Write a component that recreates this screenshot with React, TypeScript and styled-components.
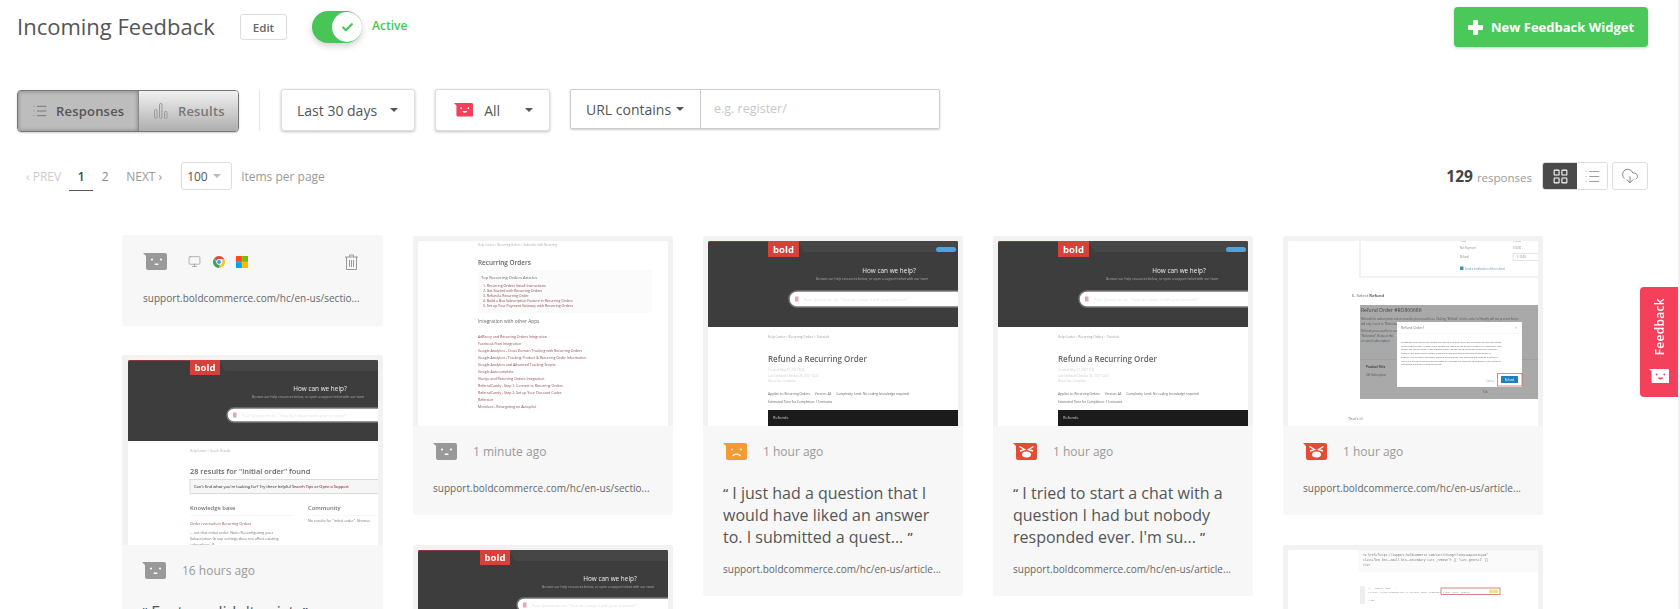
import React from "react";
import styled, { createGlobalStyle } from "styled-components";
import { Check, CloudDownload, LayoutGrid, List, Monitor } from "lucide-react";

const GlobalStyle = createGlobalStyle`
  html, body {
    margin: 0;
    padding: 0;
    height: 609px;
    overflow: hidden;
    background: #fff;
  }
  * {
    box-sizing: border-box;
  }
`;

const Page = styled.div`
  position: relative;
  width: 1680px;
  height: 609px;
  overflow: hidden;
  font-family: "Open Sans", "Liberation Sans", sans-serif;
  color: #555;
  background: #fff;
  border-right: 2px solid #f1f1f1;
`;

const TopBar = styled.div`
  display: flex;
  align-items: flex-start;
  height: 90px;
  padding: 7px 30px 0 17px;
`;

const Title = styled.h1`
  width: 198px;
  margin: 0 25px 0 0;
  font-size: 22px;
  line-height: 38px;
  font-weight: 400;
  color: #555;
  white-space: nowrap;
`;

const EditButton = styled.button`
  width: 47px;
  height: 26px;
  margin: 7px 25px 0 0;
  padding: 0;
  font: 600 11.5px "Open Sans", sans-serif;
  color: #666;
  background: #fff;
  border: 1px solid #ddd;
  border-radius: 3px;
`;

const Toggle = styled.div`
  position: relative;
  width: 50px;
  height: 32px;
  margin: 4px 10px 0 0;
  border-radius: 16px;
  background: #47c556;
  box-shadow: 0 3px 6px rgba(0, 0, 0, 0.18);
`;

const Knob = styled.span`
  position: absolute;
  top: 1px;
  right: 0;
  width: 30px;
  height: 30px;
  display: flex;
  align-items: center;
  justify-content: center;
  border-radius: 50%;
  background: #fff;
  color: #47c556;
`;

const ActiveLabel = styled.span`
  font-size: 12px;
  font-weight: 600;
  line-height: 38px;
  color: #47c556;
`;

const NewButton = styled.button`
  display: flex;
  align-items: center;
  gap: 8px;
  width: 194px;
  height: 40px;
  margin-left: auto;
  padding: 0 0 0 14px;
  font: 700 13px "Open Sans", sans-serif;
  color: #fff;
  background: #4bc85a;
  border: 0;
  border-radius: 4px;
  box-shadow: 0 1px 3px rgba(0, 0, 0, 0.2);
`;

const FilterRow = styled.div`
  display: flex;
  align-items: flex-start;
  height: 73px;
  margin-top: -1px;
  padding-left: 17px;
`;

const Segment = styled.div`
  display: flex;
  width: 222px;
  height: 42px;
  margin-top: 1px;
  border: 1px solid #777;
  border-radius: 4px;
  overflow: hidden;
  box-shadow: 0 1px 2px rgba(0, 0, 0, 0.2);
`;

const SegmentItem = styled.div<{ $active?: boolean }>`
  display: flex;
  align-items: center;
  gap: ${(p) => (p.$active ? "8px" : "10px")};
  width: ${(p) => (p.$active ? "122px" : "100px")};
  padding-left: ${(p) => (p.$active ? "14px" : "15px")};
  font-size: 13px;
  font-weight: 600;
  letter-spacing: 0.2px;
  color: ${(p) => (p.$active ? "#555" : "#777")};
  background: ${(p) => (p.$active ? "#bdbdbd" : "linear-gradient(#f1f1f1, #aeaeae)")};
  box-shadow: ${(p) => (p.$active ? "inset 0 0 4px rgba(0, 0, 0, 0.35)" : "none")};
  border-right: ${(p) => (p.$active ? "1px solid #888" : "0")};
`;

const VerticalRule = styled.div`
  width: 1px;
  height: 40px;
  margin: 1px 21px 0 20px;
  background: #e4e4e4;
`;

const Dropdown = styled.div<{ $width: number; $inset: number }>`
  display: flex;
  align-items: center;
  justify-content: space-between;
  width: ${(p) => p.$width}px;
  height: 42px;
  margin-right: 20px;
  padding: 0 16px 0 ${(p) => p.$inset}px;
  font-size: 14px;
  color: #555;
  background: #fff;
  border: 1px solid #ddd;
  border-radius: 3px;
  box-shadow: 0 1px 3px rgba(0, 0, 0, 0.25);
`;

const DropdownLabel = styled.span`
  display: flex;
  align-items: center;
  gap: 11px;
`;

const Caret = styled.span<{ $light?: boolean }>`
  display: inline-block;
  width: 0;
  height: 0;
  border-left: 4px solid transparent;
  border-right: 4px solid transparent;
  border-top: 4px solid ${(p) => (p.$light ? "#bbb" : "#555")};
`;

const UrlFilter = styled.div`
  display: flex;
  width: 370px;
  height: 40px;
  border: 1px solid #ccc;
  border-radius: 2px;
  font-size: 14px;
  box-shadow: 0 1px 2px rgba(0, 0, 0, 0.2);
`;

const UrlMode = styled.div`
  display: flex;
  align-items: center;
  gap: 5px;
  width: 130px;
  padding-left: 15px;
  border-right: 1px solid #ccc;
`;

const UrlInput = styled.div`
  flex: 1;
  padding-left: 13px;
  font-size: 12.5px;
  line-height: 38px;
  color: #c8c8c8;
`;

const PagerRow = styled.div`
  display: flex;
  align-items: center;
  height: 28px;
  padding: 0 30px 0 26px;
  font-size: 12px;
`;

const PagerLink = styled.span<{ $muted?: boolean }>`
  color: ${(p) => (p.$muted ? "#ccc" : "#999")};
  font-size: 12px;
`;

const PageNumber = styled.span<{ $current?: boolean }>`
  width: 24px;
  height: 28px;
  margin-top: 2px;
  font-size: 12px;
  font-weight: ${(p) => (p.$current ? 600 : 400)};
  line-height: 28px;
  text-align: center;
  color: ${(p) => (p.$current ? "#444" : "#888")};
  border-bottom: ${(p) => (p.$current ? "1px solid #555" : "0")};
`;

const PageNumbers = styled.div`
  display: flex;
  margin: 0 9px 0 8px;
`;

const PerPage = styled.div`
  display: flex;
  align-items: center;
  justify-content: space-between;
  width: 51px;
  height: 28px;
  margin: 0 9px 0 19px;
  padding: 0 10px 0 5px;
  font-size: 12px;
  border: 1px solid #ddd;
  border-radius: 3px;
`;

const PerPageLabel = styled.span`
  color: #999;
  font-size: 12px;
`;

const Count = styled.div`
  display: flex;
  align-items: baseline;
  gap: 4px;
  margin-left: auto;
  margin-right: 10px;
  font-size: 11.5px;
  color: #999;
`;

const CountNumber = styled.b`
  font-size: 15.5px;
  font-weight: 700;
  color: #444;
`;

const ViewSwitch = styled.div`
  display: flex;
  width: 66px;
  height: 28px;
  border: 1px solid #ddd;
  border-radius: 3px;
  overflow: hidden;
`;

const ViewButton = styled.div<{ $active?: boolean }>`
  display: flex;
  align-items: center;
  justify-content: center;
  flex: ${(p) => (p.$active ? "0 0 34px" : "1")};
  color: ${(p) => (p.$active ? "#fff" : "#777")};
  background: ${(p) => (p.$active ? "#4a4a4a" : "#fff")};
`;

const DownloadButton = styled.div`
  display: flex;
  align-items: center;
  justify-content: center;
  width: 36px;
  height: 28px;
  margin-left: 4px;
  color: #666;
  border: 1px solid #ddd;
  border-radius: 3px;
`;

const Board = styled.div`
  display: grid;
  grid-template-columns: 261px repeat(4, 260px);
  column-gap: 30px;
  margin-top: 45px;
  padding-left: 122px;
`;

const Column = styled.div<{ $first?: boolean }>`
  display: flex;
  flex-direction: column;
  gap: ${(p) => (p.$first ? "29px" : "30px")};
  margin-top: ${(p) => (p.$first ? "0" : "1px")};
`;

const Card = styled.article`
  background: #f7f7f8;
  border-radius: 3px;
  overflow: hidden;
`;

const ShotFrame = styled.div`
  height: 190px;
  padding-top: 5px;
  background: #f2f2f2;
`;

const ShotSvg = styled.svg`
  display: block;
  width: 250px;
  height: 185px;
  margin: 0 auto;
  background: #fff;
  border-radius: 2px 2px 0 0;
  font-family: "Open Sans", "Liberation Sans", sans-serif;
  filter: blur(0.45px);
`;

const CardBody = styled.div`
  padding: 17px 20px 19px;
`;

const MetaRow = styled.div`
  display: flex;
  align-items: center;
  height: 17px;
`;

const TimeLabel = styled.span`
  margin-left: 16px;
  font-size: 12px;
  color: #999;
`;

const Quote = styled.p`
  margin: 22px 0 0;
  font-size: 16px;
  line-height: 22px;
  color: #555;
  white-space: nowrap;
`;

const QuoteMark = styled.span`
  font-size: 13px;
  font-weight: 600;
  vertical-align: 1px;
`;

const UrlText = styled.div<{ $tight?: boolean }>`
  margin-top: ${(p) => (p.$tight ? "13px" : "20px")};
  font-size: 10px;
  line-height: 16px;
  letter-spacing: 0.03px;
  color: #666;
  white-space: nowrap;
`;

const DeviceRow = styled.div`
  display: flex;
  align-items: center;
  gap: 11.5px;
  flex: 1;
  margin-left: 21px;
  color: #777;
  filter: blur(0.3px);
`;

const TrashSlot = styled.span`
  display: flex;
  margin-left: auto;
  color: #999;
`;

const CompactBody = styled(CardBody)`
  height: 91px;
  padding: 18px 25px 0 21px;
`;

const FeedbackTab = styled.div`
  position: absolute;
  top: 287px;
  right: 0;
  width: 38px;
  height: 110px;
  display: flex;
  flex-direction: column;
  align-items: center;
  justify-content: flex-end;
  gap: 13px;
  padding-bottom: 14px;
  color: #fff;
  background: #f4405a;
  border-radius: 4px 0 0 4px;
`;

const FeedbackLabel = styled.span`
  writing-mode: vertical-rl;
  transform: rotate(180deg);
  font-size: 12px;
  font-weight: 600;
  letter-spacing: 0.3px;
`;

type Mood = "neutral" | "sad" | "angry" | "happy";

function Face({
  mood,
  fill,
  ink = "#fff",
  scale = 1,
}: {
  mood: Mood;
  fill: string;
  ink?: string;
  scale?: number;
}) {
  return (
    <svg width={24 * scale} height={17 * scale} viewBox="0 0 24 17">
      <path
        d="M0 0H22a2 2 0 0 1 2 2V15a2 2 0 0 1-2 2H5a2 2 0 0 1-2-2V3Z"
        fill={fill}
      />
      {mood === "neutral" && (
        <g fill={ink}>
          <circle cx="9" cy="6.500" r="1.100" />
          <circle cx="18" cy="6.500" r="1.100" />
          <rect x="11.500" y="10.500" width="4" height="1.400" rx="0.700" />
        </g>
      )}
      {mood === "sad" && (
        <g fill={ink} stroke={ink}>
          <circle cx="9" cy="6.500" r="0.900" strokeWidth="0" />
          <circle cx="18" cy="6.500" r="0.900" strokeWidth="0" />
          <path d="M9.500 13c2-2.600 6-2.600 8 0" fill="none" strokeWidth="1.300" />
        </g>
      )}
      {mood === "angry" && (
        <g stroke={ink} fill={ink}>
          <path d="M6.500 3.500 11.500 6.500 7 8M20.500 3.500 15.500 6.500 20 8" fill="none" strokeWidth="1.400" />
          <ellipse cx="13.500" cy="11.500" rx="4.500" ry="3" strokeWidth="0" />
        </g>
      )}
      {mood === "happy" && (
        <g fill={ink}>
          <circle cx="9" cy="6.500" r="1.100" />
          <circle cx="18" cy="6.500" r="1.100" />
          <path d="M10.500 10h6c-.3 3-5.700 3-6 0Z" />
        </g>
      )}
    </svg>
  );
}

function ResultsBars() {
  return (
    <svg width="14" height="16" viewBox="0 0 14 16" fill="none" stroke="#999" strokeWidth="1">
      <rect x="0.500" y="6.500" width="2.500" height="9" rx="1.200" />
      <rect x="5.500" y="0.500" width="2.500" height="15" rx="1.200" />
      <rect x="10.500" y="8.500" width="2.500" height="7" rx="1.200" />
    </svg>
  );
}

function PlusIcon() {
  return (
    <svg width="15" height="15" viewBox="0 0 15 15" fill="#fff">
      <rect x="5" y="0" width="5" height="15" rx="1" />
      <rect x="0" y="5" width="15" height="5" rx="1" />
    </svg>
  );
}

function TrashIcon() {
  return (
    <svg width="13" height="16" viewBox="0 0 13 16" fill="none" stroke="currentColor" strokeWidth="1">
      <path d="M0 3H13M4.500 3V1H8.500V3M1.500 3V15.500H11.500V3M4.500 6V13M6.500 6V13M8.500 6V13" />
    </svg>
  );
}

function ChromeLogo() {
  return (
    <svg width="12" height="12" viewBox="0 0 12 12">
      <path d="M6 0a6 6 0 0 1 5.200 3H6a3 3 0 0 0-2.800 1.900L1.400 2.200A6 6 0 0 1 6 0Z" fill="#e2493b" />
      <path d="M11.200 3A6 6 0 0 1 6 12l2.600-4.500A3 3 0 0 0 8.400 3Z" fill="#f4c534" />
      <path d="M6 12A6 6 0 0 1 1.400 2.200l2.600 5.300A3 3 0 0 0 7 8.800Z" fill="#3da35a" />
      <circle cx="6" cy="6" r="2.300" fill="#4a8bef" stroke="#fff" strokeWidth="0.700" />
    </svg>
  );
}

function WindowsLogo() {
  return (
    <svg width="12" height="12" viewBox="0 0 12 12">
      <rect width="5.900" height="5.900" fill="#f25022" />
      <rect x="6.100" width="5.900" height="5.900" fill="#7fba00" />
      <rect y="6.100" width="5.900" height="5.900" fill="#00a4ef" />
      <rect x="6.100" y="6.100" width="5.900" height="5.900" fill="#ffb900" />
    </svg>
  );
}

function SiteHeader({
  height,
  searchX,
  searchY,
  searchH,
  helpX,
  helpY,
  subX,
  logoX,
  logoW,
  logoH,
  cta,
}: {
  height: number;
  searchX: number;
  searchY: number;
  searchH: number;
  helpX: number;
  helpY: number;
  subX: number;
  logoX: number;
  logoW: number;
  logoH: number;
  cta?: boolean;
}) {
  return (
    <g>
      <rect width="250" height={height} fill="#3d3d3d" />
      <rect width="250" height="1" fill="#8d3a36" />
      <path d={`M${logoX + logoW - 1} 0 L250 0 V11 L${logoX + logoW + 5} 11 Z`} fill="#464646" />
      <rect x={logoX} y="0" width={logoW} height={logoH} fill="#d8403a" />
      <text x={logoX + logoW / 2} y={logoH - 4} fontSize="9.500" fontWeight="700" fill="#fff" textAnchor="middle">
        bold
      </text>
      {cta && <rect x="228" y="6" width="20" height="5" rx="2.500" fill="#4ca3dd" />}
      <text x={helpX} y={helpY} fontSize="6.400" fill="#eee" textAnchor="middle">
        How can we help?
      </text>
      <text x={subX} y={helpY + 7} fontSize="3.300" fill="#aaa">
        Browse our help resources below, or open a support ticket with our team
      </text>
      <rect
        x={searchX}
        y={searchY}
        width="260"
        height={searchH}
        rx={searchH / 2}
        fill="#fff"
        stroke="#777"
        strokeWidth="1.500"
      />
      <rect x={searchX + 6} y={searchY + searchH / 2 - 2.500} width="3.500" height="5" fill="#e6a8a8" />
      <text x={searchX + 15} y={searchY + searchH / 2 + 1.500} fontSize="3.900" fill="#ddd">
        Your Questions etc. "How do I swap it with your account?"
      </text>
    </g>
  );
}

function ResultsShot() {
  return (
    <ShotSvg viewBox="0 0 250 185">
      <SiteHeader
        height={81}
        searchX={99}
        searchY={48}
        searchH={14}
        helpX={192}
        helpY={31}
        subX={124}
        logoX={62}
        logoW={30}
        logoH={15}
      />
      <text x="62" y="92" fontSize="3" fill="#aaa">Help Center &gt; Search Results</text>
      <text x="62" y="113.500" fontSize="7.400" fontWeight="600" fill="#666">28 results for "initial order" found</text>
      <rect x="62" y="119.500" width="200" height="14" fill="#f6f6f6" stroke="#ccc" strokeWidth="0.700" />
      <text x="66" y="128" fontSize="3.900" fontWeight="600" fill="#555">
        Can't find what you're looking for? Try these helpful <tspan fill="#9c3a3a">Search Tips</tspan> or <tspan fill="#9c3a3a">Open a Support</tspan>
      </text>
      <text x="62" y="150" fontSize="5.800" fontWeight="600" fill="#777">Knowledge base</text>
      <text x="180" y="150" fontSize="5.800" fontWeight="600" fill="#777">Community</text>
      <rect x="62" y="155" width="104" height="0.500" fill="#eee" />
      <rect x="180" y="155" width="70" height="0.500" fill="#eee" />
      <text x="62" y="165" fontSize="3.700" fill="#a04a4a">Order reversals in Recurring Orders</text>
      <text x="180" y="162" fontSize="3.700" fill="#777">No results for "initial order". Browse</text>
      <text x="62" y="174" fontSize="3.700" fill="#777">... out that initial order. Note: Reconfiguring your</text>
      <text x="62" y="180" fontSize="3.700" fill="#777">Subscription Group settings does not affect existing</text>
      <text x="62" y="186" fontSize="3.700" fill="#777">subscribers. If</text>
    </ShotSvg>
  );
}

const topArticles = [
  "1. Recurring Orders Install Instructions",
  "2. Get Started with Recurring Orders",
  "3. Refund a Recurring Order",
  "4. Build a Box Subscription Feature in Recurring Orders",
  "5. Set up Your Payment Gateway with Recurring Orders",
];

const integrations = [
  "AdRecoy and Recurring Orders Integration",
  "Facebook Pixel Integration",
  "Google Analytics - Cross Domain Tracking with Recurring Orders",
  "Google Analytics - Tracking Product & Recurring Order Information",
  "Google Analytics and Advanced Tracking Scripts",
  "Google Autocomplete",
  "Klaviyo and Recurring Orders Integration",
  "ReferralCandy - Step 1: Connect to Recurring Orders",
  "ReferralCandy - Step 2: Set up Your Discount Codes",
  "Refersion",
  "Movelore - Retargeting on Autopilot",
];

function RecurringShot() {
  return (
    <ShotSvg viewBox="0 0 250 185">
      <text x="60" y="5" fontSize="2.900" fill="#aaa">Help Center &gt; Recurring Orders &gt; Subscribe with Recurring</text>
      <text x="60" y="23.500" fontSize="6.400" fontWeight="600" fill="#666">Recurring Orders</text>
      <rect x="60" y="29" width="174" height="43" fill="#fbfbfb" />
      <text x="63" y="37.500" fontSize="4.100" fill="#666">Top Recurring Orders Articles</text>
      {topArticles.map((line, i) => (
        <text key={line} x="65" y={45.500 + i * 5} fontSize="3.500" fill="#8a4a55">{line}</text>
      ))}
      <text x="60" y="82" fontSize="4.800" fill="#666">Integration with other Apps</text>
      {integrations.map((line, i) => (
        <text key={line} x="60" y={96.500 + i * 7} fontSize="3.500" fill="#8a4a55">{line}</text>
      ))}
    </ShotSvg>
  );
}

function RefundShot() {
  return (
    <ShotSvg viewBox="0 0 250 185">
      <SiteHeader
        height={86}
        searchX={81}
        searchY={50}
        searchH={16}
        helpX={181}
        helpY={32}
        subX={108}
        logoX={60}
        logoW={31}
        logoH={16}
        cta
      />
      <text x="60" y="97" fontSize="3.100" fill="#999">Help Center  &gt;  Recurring Orders  &gt;  Tutorials</text>
      <text x="60" y="120.500" fontSize="8" fontWeight="600" fill="#666">Refund a Recurring Order</text>
      <text x="60" y="130" fontSize="2.900" fill="#ccc">Created: May 27, 2017 8:32</text>
      <text x="60" y="135.500" fontSize="2.900" fill="#ccc">Last Updated: October 26, 2017 14:27</text>
      <text x="60" y="141" fontSize="2.900" fill="#ccc">Was it Up - Complete</text>
      <text x="60" y="154" fontSize="3.200" fill="#666" xmlSpace="preserve">Applies to: Recurring Orders      Version: All      Complexity Level: No coding knowledge required</text>
      <text x="60" y="162" fontSize="3.200" fill="#666">Estimated Time for Completion: 15 minutes</text>
      <rect x="60" y="169" width="190" height="16" fill="#1b1b1b" />
      <text x="65" y="177.500" fontSize="4" fill="#ccc">Refunds</text>
    </ShotSvg>
  );
}

const modalLines = [
  "Processing this refund will update the refund in Shopify and your customer will see the refund",
  "in his account page. As such it will update the status of the order in Shopify to \"Refunded\" and",
  "trigger any refund email in the settings page. PLEASE NOTE: it cannot update the inventory",
  "levels if your store won't restock change the low item stock accounts on the order in",
  "Shopify. It is a general accessory without for the order and matched any specific product. If",
  "you'd like to refund an item on the order as \"refunded & returned to inventory\" you'll need to",
  "do that on the order in Shopify as well.",
];

function ModalShot() {
  return (
    <ShotSvg viewBox="0 0 250 185">
      <rect x="72" y="-2" width="180" height="38" fill="#fff" stroke="#eee" strokeWidth="1.500" />
      <text x="172" y="1" fontSize="2.600" fill="#888">Total</text>
      <text x="225" y="1" fontSize="2.600" fill="#888">$10.00</text>
      <text x="172" y="7.500" fontSize="2.600" fill="#888">Net Payment</text>
      <text x="225" y="7.500" fontSize="2.600" fill="#888">$10.00</text>
      <text x="172" y="17" fontSize="2.600" fill="#888">Refund</text>
      <rect x="225" y="12.500" width="30" height="7" fill="#fff" stroke="#ccc" strokeWidth="0.500" />
      <text x="229" y="17" fontSize="2.600" fill="#888">$ 10.00</text>
      <rect x="172" y="25.500" width="3.500" height="3.500" fill="#4a90b8" />
      <text x="177" y="28.500" fontSize="2.600" fill="#6a8ea0">Send a notification of this refund</text>
      <text x="64" y="56" fontSize="4.200" fill="#666">6.   Select <tspan fontWeight="700">Refund</tspan></text>
      <rect x="72" y="64" width="180" height="94" fill="#a9a9a9" />
      <text x="73" y="71" fontSize="5" fill="#444">Refund Order #RO860686</text>
      <text x="73" y="78.500" fontSize="2.800" fill="#555">Refunds for subscription orders must be processed here. Clicking "Refund" on the order in Shopify will not prevent future</text>
      <text x="73" y="83.500" fontSize="2.800" fill="#555">will only revert to "Refunded"</text>
      <text x="73" y="90.500" fontSize="2.800" fill="#555">Refunds processed here are</text>
      <text x="73" y="95.500" fontSize="2.800" fill="#555">"Refunded". Request this</text>
      <text x="73" y="100.500" fontSize="2.800" fill="#456">or cancel subscription</text>
      <rect x="72" y="118" width="180" height="0.600" fill="#999" />
      <text x="78" y="127" fontSize="3" fontWeight="700" fill="#444">Product Title</text>
      <text x="78" y="134.500" fontSize="2.600" fill="#555">Gift Subscription</text>
      <text x="195" y="152" fontSize="3" fill="#444">Tot</text>
      <rect x="109" y="81" width="125" height="65" fill="#fff" />
      <text x="113" y="88" fontSize="3.400" fill="#777">Refund Order?</text>
      <text x="227" y="88" fontSize="3.400" fill="#999">×</text>
      <rect x="109" y="92" width="125" height="0.400" fill="#eee" />
      {modalLines.map((line, i) => (
        <text key={line} x="113" y={102 + i * 3.700} fontSize="2.300" fill="#666">{line}</text>
      ))}
      <text x="198" y="140.500" fontSize="2.800" fill="#aaa">Cancel</text>
      <rect x="213" y="135" width="17" height="7" rx="0.500" fill="#1f80c0" />
      <text x="221.500" y="139.800" fontSize="2.800" fill="#fff" textAnchor="middle">Refund</text>
      <rect x="209.500" y="132.500" width="24.500" height="12.500" fill="none" stroke="#d0604f" strokeWidth="0.700" />
      <text x="60" y="179" fontSize="3.800" fill="#777">That's it!</text>
    </ShotSvg>
  );
}

function CodeShot() {
  return (
    <ShotSvg viewBox="0 0 250 185">
      <rect x="70" y="0" width="180" height="22" fill="#fafafa" />
      <text x="75" y="6" fontSize="2.900" fontFamily="Liberation Mono" fill="#777">&lt;a href="https://support.boldcommerce.com/cart/change?line=1&amp;quantity=0"</text>
      <text x="75" y="11" fontSize="2.900" fontFamily="Liberation Mono" fill="#777">class="btn btn--small btn--secondary cart__remove"&gt; {"{{ 'cart.general' }}"}</text>
      <text x="75" y="16" fontSize="2.900" fontFamily="Liberation Mono" fill="#777">&lt;/a&gt;</text>
      <rect x="72" y="36" width="5" height="18" fill="#eee" />
      <text x="80" y="39" fontSize="2.300" fontFamily="Liberation Mono" fill="#888">&lt;!-- remove item --&gt;</text>
      <text x="80" y="42.500" fontSize="2.300" fontFamily="Liberation Mono" fill="#888">{"<a href=\"/cart/change?line={{ forloop.index }}&quantity=0\" class=\"cart\""}</text>
      <text x="80" y="51" fontSize="2.300" fontFamily="Liberation Mono" fill="#888">&lt;/td&gt;</text>
      <rect x="153" y="38" width="59" height="6.500" fill="#fff" stroke="#c0504d" strokeWidth="0.700" />
      <rect x="201" y="39.500" width="9" height="3.500" fill="#f4e27a" />
      <text x="155" y="42.500" fontSize="2.300" fontFamily="Liberation Mono" fill="#888">class="cart__remove"</text>
    </ShotSvg>
  );
}

const urlSection = "support.boldcommerce.com/hc/en-us/sectio...";
const urlArticle = "support.boldcommerce.com/hc/en-us/article...";

function App() {
  return (
    <Page>
      <GlobalStyle />
      <TopBar>
        <Title>Incoming Feedback</Title>
        <EditButton>Edit</EditButton>
        <Toggle>
          <Knob>
            <Check size={13} strokeWidth={4} />
          </Knob>
        </Toggle>
        <ActiveLabel>Active</ActiveLabel>
        <NewButton>
          <PlusIcon />
          New Feedback Widget
        </NewButton>
      </TopBar>

      <FilterRow>
        <Segment>
          <SegmentItem $active>
            <List size={16} strokeWidth={1} />
            Responses
          </SegmentItem>
          <SegmentItem>
            <ResultsBars />
            Results
          </SegmentItem>
        </Segment>
        <VerticalRule />
        <Dropdown $width={134} $inset={15}>
          Last 30 days
          <Caret />
        </Dropdown>
        <Dropdown $width={115} $inset={18}>
          <DropdownLabel>
            <Face mood="happy" fill="#f4405a" scale={0.8} />
            All
          </DropdownLabel>
          <Caret />
        </Dropdown>
        <UrlFilter>
          <UrlMode>
            URL contains
            <Caret />
          </UrlMode>
          <UrlInput>e.g. register/</UrlInput>
        </UrlFilter>
      </FilterRow>

      <PagerRow>
        <PagerLink $muted>‹ PREV</PagerLink>
        <PageNumbers>
          <PageNumber $current>1</PageNumber>
          <PageNumber>2</PageNumber>
        </PageNumbers>
        <PagerLink>NEXT ›</PagerLink>
        <PerPage>
          100
          <Caret $light />
        </PerPage>
        <PerPageLabel>Items per page</PerPageLabel>
        <Count>
          <CountNumber>129</CountNumber> responses
        </Count>
        <ViewSwitch>
          <ViewButton $active>
            <LayoutGrid size={17} strokeWidth={1.5} />
          </ViewButton>
          <ViewButton>
            <List size={17} strokeWidth={1} />
          </ViewButton>
        </ViewSwitch>
        <DownloadButton>
          <CloudDownload size={18} strokeWidth={1} />
        </DownloadButton>
      </PagerRow>

      <Board>
        <Column $first>
          <Card>
            <CompactBody>
              <MetaRow>
                <Face mood="neutral" fill="#999" />
                <DeviceRow>
                  <Monitor size={13} strokeWidth={1} />
                  <ChromeLogo />
                  <WindowsLogo />
                  <TrashSlot>
                    <TrashIcon />
                  </TrashSlot>
                </DeviceRow>
              </MetaRow>
              <UrlText>{urlSection}</UrlText>
            </CompactBody>
          </Card>
          <Card>
            <ShotFrame>
              <ResultsShot />
            </ShotFrame>
            <CardBody>
              <MetaRow>
                <Face mood="neutral" fill="#999" />
                <TimeLabel>16 hours ago</TimeLabel>
              </MetaRow>
              <Quote>
                <QuoteMark>“</QuoteMark> Feature didn't exist. <QuoteMark>”</QuoteMark>
              </Quote>
            </CardBody>
          </Card>
        </Column>

        <Column>
          <Card>
            <ShotFrame>
              <RecurringShot />
            </ShotFrame>
            <CardBody>
              <MetaRow>
                <Face mood="neutral" fill="#999" />
                <TimeLabel>1 minute ago</TimeLabel>
              </MetaRow>
              <UrlText>{urlSection}</UrlText>
            </CardBody>
          </Card>
          <Card>
            <ShotFrame>
              <ResultsShot />
            </ShotFrame>
          </Card>
        </Column>

        <Column>
          <Card>
            <ShotFrame>
              <RefundShot />
            </ShotFrame>
            <CardBody>
              <MetaRow>
                <Face mood="sad" fill="#f59a32" />
                <TimeLabel>1 hour ago</TimeLabel>
              </MetaRow>
              <Quote>
                <QuoteMark>“</QuoteMark> I just had a question that I
                <br />
                would have liked an answer
                <br />
                to. I submitted a quest... <QuoteMark>”</QuoteMark>
              </Quote>
              <UrlText $tight>{urlArticle}</UrlText>
            </CardBody>
          </Card>
        </Column>

        <Column>
          <Card>
            <ShotFrame>
              <RefundShot />
            </ShotFrame>
            <CardBody>
              <MetaRow>
                <Face mood="angry" fill="#e44d34" />
                <TimeLabel>1 hour ago</TimeLabel>
              </MetaRow>
              <Quote>
                <QuoteMark>“</QuoteMark> I tried to start a chat with a
                <br />
                question I had but nobody
                <br />
                responded ever. I'm su... <QuoteMark>”</QuoteMark>
              </Quote>
              <UrlText $tight>{urlArticle}</UrlText>
            </CardBody>
          </Card>
        </Column>

        <Column>
          <Card>
            <ShotFrame>
              <ModalShot />
            </ShotFrame>
            <CardBody>
              <MetaRow>
                <Face mood="angry" fill="#e44d34" />
                <TimeLabel>1 hour ago</TimeLabel>
              </MetaRow>
              <UrlText>{urlArticle}</UrlText>
            </CardBody>
          </Card>
          <Card>
            <ShotFrame>
              <CodeShot />
            </ShotFrame>
          </Card>
        </Column>
      </Board>

      <FeedbackTab>
        <FeedbackLabel>Feedback</FeedbackLabel>
        <Face mood="happy" fill="#fff" ink="#f4405a" scale={0.85} />
      </FeedbackTab>
    </Page>
  );
}

export default App;
